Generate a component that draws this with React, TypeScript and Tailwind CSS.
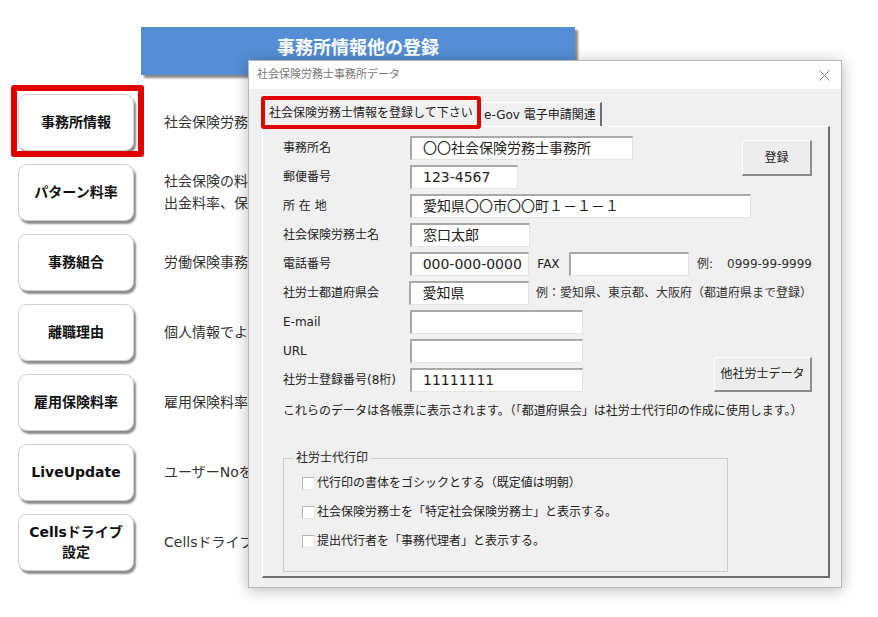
import React from 'react';

// descriptions beside each button; the dialog covers the rest of each line
const menu = [
	{ label: '事務所情報', desc: ['社会保険労務'], marked: true },
	{ label: 'パターン料率', desc: ['社会保険の料', '出金料率、保'] },
	{ label: '事務組合', desc: ['労働保険事務'] },
	{ label: '離職理由', desc: ['個人情報でよ'] },
	{ label: '雇用保険料率', desc: ['雇用保険料率'] },
	{ label: 'LiveUpdate', desc: ['ユーザーNoを'] },
	{ label: 'Cellsドライブ\n設定', desc: ['Cellsドライブ'] },
];

const Field: React.FC<{ value?: string; w: string }> = ({ value, w }) => (
	<div
		className={`${w} h-[24px] bg-white border-t-2 border-l-2 border-b border-r border-t-[#a9a9a9] border-l-[#a9a9a9] border-b-[#e4e4e4] border-r-[#e4e4e4] pl-[11px] text-[14px] leading-[21px] text-[#222] whitespace-nowrap overflow-hidden`}
	>
		{value}
	</div>
);

const Row: React.FC<{ label: string; children: React.ReactNode }> = ({ label, children }) => (
	<div className="flex items-center h-[24px]">
		<div className="w-[127px] text-[12px] text-[#222] whitespace-nowrap">{label}</div>
		{children}
	</div>
);

const WinButton: React.FC<{ text: string; w: string; h: string; className?: string }> = ({ text, w, h, className }) => (
	<div
		className={`${w} ${h} ${className ?? ''} flex items-center justify-center bg-[#ededed] border-t border-l border-white border-r-2 border-b-2 border-r-[#8c8c8c] border-b-[#8c8c8c] text-[12px] text-[#222]`}
	>
		{text}
	</div>
);

const Check: React.FC<{ text: string }> = ({ text }) => (
	<div className="flex items-center h-[18px]">
		<span className="w-[13px] h-[13px] bg-white border-t border-l border-[#b4b4b4] border-r border-b border-r-[#e6e6e6] border-b-[#e6e6e6]" />
		<span className="ml-[2px] text-[12px] leading-[18px] text-[#222]">{text}</span>
	</div>
);

const App: React.FC = () => {
	return (
		<div className="relative w-[878px] h-[617px] overflow-hidden bg-white font-['DejaVu_Sans','Noto_Sans_CJK_JP',sans-serif]">
			{/* background sheet */}
			<div className="pt-[27px] ml-[141px]">
				<div className="w-[434px] h-[48px] bg-[#558ed5] shadow-[3px_3px_2px_rgba(0,0,0,0.45)] flex justify-center pt-[8px]">
					<span className="text-white font-bold text-[18px] leading-[26px]">事務所情報他の登録</span>
				</div>
			</div>
			<div className="mt-[18px] pl-[18px] flex flex-col gap-[12px]">
				{menu.map((m) => (
					<div key={m.label} className="flex items-center h-[58px]">
						<div className="relative shrink-0">
							<div className="w-[116px] h-[57px] rounded-[9px] border border-[#cfcfcf] bg-white shadow-[2px_3px_2px_rgba(0,0,0,0.45)] flex items-center justify-center text-center text-[14px] leading-[20px] font-bold text-[#111] whitespace-pre-line">
								{m.label}
							</div>
							{m.marked && (
								<span className="absolute -top-[9px] -left-[7px] -right-[10px] -bottom-[6px] border-[6px] border-[#e00000] rounded-[3px]" />
							)}
						</div>
						<div className="ml-[30px] w-[84px] overflow-hidden text-[14px] leading-[22px] text-[#333] whitespace-nowrap">
							{m.desc.map((d) => (
								<div key={d}>{d}</div>
							))}
						</div>
					</div>
				))}
			</div>

			{/* dialog window */}
			<div className="absolute left-[248px] top-[60px] w-[594px] h-[528px] border border-[#b8b8b8] bg-[#f0f0f0] shadow-[0_2px_14px_rgba(0,0,0,0.28)] flex flex-col">
				<div className="h-[28px] bg-white flex items-center justify-between pl-[8px] pr-[11px] shrink-0">
					<span className="text-[11px] text-[#777]">社会保険労務士事務所データ</span>
					<svg width="11" height="11" viewBox="0 0 11 11" stroke="#808080" strokeWidth="1">
						<path d="M0.5 0.5 L10.5 10.5 M10.5 0.5 L0.5 10.5" />
					</svg>
				</div>
				<div className="flex-1 flex flex-col pl-[13px] pr-[11px] pt-[9px] pb-[9px]">
					{/* tabs */}
					<div className="flex items-end h-[28px] shrink-0">
						<div className="relative h-[28px] w-[217px] bg-[#f0f0f0] border-t border-l border-white border-r border-r-[#7a7a7a] flex items-center pl-[6px] text-[12px] text-[#222] whitespace-nowrap">
							社会保険労務士情報を登録して下さい
							<span className="absolute -top-[3px] -left-[2px] -right-[3px] -bottom-[3px] border-[4px] border-[#e00000] rounded-[3px]" />
						</div>
						<div className="h-[24px] w-[122px] ml-[1px] border-t border-l border-white border-r-2 border-r-[#6e6e6e] flex items-center pl-[3px] text-[12px] text-[#222] whitespace-nowrap">
							e-Gov 電子申請関連
						</div>
					</div>
					{/* panel */}
					<div className="flex-1 border-t border-l border-white border-r-2 border-b-2 border-r-[#6e6e6e] border-b-[#6e6e6e] pl-[20px] pr-[16px] pt-[9px]">
						<div className="flex justify-between">
							<div className="flex flex-col gap-[5px]">
								<Row label="事務所名">
									<Field w="w-[223px]" value="〇〇社会保険労務士事務所" />
								</Row>
								<Row label="郵便番号">
									<Field w="w-[108px]" value="123-4567" />
								</Row>
							</div>
							<WinButton text="登録" w="w-[70px]" h="h-[36px]" className="mt-[4px]" />
						</div>
						<div className="flex flex-col gap-[5px] mt-[5px]">
							<Row label="所 在 地">
								<Field w="w-[341px]" value="愛知県〇〇市〇〇町１－１－１" />
							</Row>
							<Row label="社会保険労務士名">
								<Field w="w-[120px]" value="窓口太郎" />
							</Row>
							<Row label="電話番号">
								<Field w="w-[120px]" value="000-000-0000" />
								<span className="ml-[8px] w-[32px] text-[12px] text-[#222]">FAX</span>
								<Field w="w-[120px]" />
								<span className="ml-[8px] text-[12px] text-[#333] whitespace-nowrap">
									例:<span className="ml-[14px]">0999-99-9999</span>
								</span>
							</Row>
							<Row label="社労士都道府県会">
								<Field w="w-[120px]" value="愛知県" />
								<span className="ml-[7px] text-[12px] text-[#333] whitespace-nowrap">
									例：愛知県、東京都、大阪府（都道府県まで登録）
								</span>
							</Row>
							<div className="flex justify-between items-end">
								<div className="flex flex-col gap-[5px]">
									<Row label="E-mail">
										<Field w="w-[173px]" />
									</Row>
									<Row label="URL">
										<Field w="w-[173px]" />
									</Row>
									<Row label="社労士登録番号(8桁)">
										<Field w="w-[173px]" value="11111111" />
									</Row>
								</div>
								<WinButton text="他社労士データ" w="w-[98px]" h="h-[35px]" />
							</div>
						</div>
						<div className="mt-[10px] text-[12px] leading-[18px] text-[#222] whitespace-nowrap">
							これらのデータは各帳票に表示されます。（「都道府県会」は社労士代行印の作成に使用します。）
						</div>
						<fieldset className="mt-[29px] w-[445px] border border-[#cdcdcd] pb-[21px]">
							<legend className="ml-[9px] px-[3px] text-[12px] leading-[18px] text-[#222]">社労士代行印</legend>
							<div className="mt-[7px] pl-[18px] flex flex-col gap-[11px]">
								<Check text="代行印の書体をゴシックとする（既定値は明朝）" />
								<Check text="社会保険労務士を「特定社会保険労務士」と表示する。" />
								<Check text="提出代行者を「事務代理者」と表示する。" />
							</div>
						</fieldset>
					</div>
				</div>
			</div>
		</div>
	);
};

export default App;
